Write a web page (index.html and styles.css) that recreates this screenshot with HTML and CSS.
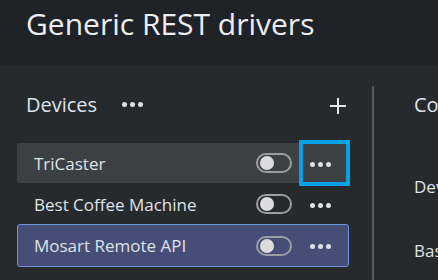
FILE: index.html
```html
<!DOCTYPE html>
<html lang="en">
<head>
  <meta charset="UTF-8">
  <title>Generic REST drivers</title>
  <link rel="stylesheet" href="styles.css">
</head>
<body>

<div class="page-header">
  <h1>Generic REST drivers</h1>
</div>

<div class="page-body">
  <div class="devices-panel">
    <div class="panel-head">
      <span class="panel-title">Devices</span>
      <span class="dots"><i></i><i></i><i></i></span>
      <span class="add-btn">
        <svg width="16" height="16" viewBox="0 0 16 16"><path d="M8 0v16M0 8h16" stroke="#e4e7ea" stroke-width="2"/></svg>
      </span>
    </div>

    <div class="device-list">
      <div class="device-row hover">
        <span class="device-name">TriCaster</span>
        <span class="toggle"></span>
        <span class="more focused"><span class="dots"><i></i><i></i><i></i></span></span>
      </div>
      <div class="device-row">
        <span class="device-name">Best Coffee Machine</span>
        <span class="toggle"></span>
        <span class="more"><span class="dots"><i></i><i></i><i></i></span></span>
      </div>
      <div class="device-row selected">
        <span class="device-name">Mosart Remote API</span>
        <span class="toggle"></span>
        <span class="more"><span class="dots"><i></i><i></i><i></i></span></span>
      </div>
    </div>
  </div>

  <div class="config-panel">
    <div class="config-title">Configuration</div>
    <div class="config-label first">Device name</div>
    <div class="config-label">Base URL</div>
  </div>
</div>

</body>
</html>
```

FILE: styles.css
```css
html, body {
  height: 100%;
  margin: 0;
  padding: 0;
  font-family: "Open Sans", "Noto Sans", sans-serif;
  background-color: #262a2d;
  color: #dfe3e8;
  overflow: hidden;
}

.page-header {
  height: 66px;
  background-color: #1f2227;
  padding: 0 26px;
  box-sizing: border-box;
}

.page-header h1 {
  margin: 0;
  padding-top: 4px;
  font-size: 30px;
  font-weight: 400;
  color: #eceef1;
  line-height: 40px;
  white-space: nowrap;
}

.page-body {
  display: flex;
  height: 214px;
}

.devices-panel {
  flex: none;
  width: 372px;
  padding: 0 23px 0 17px;
  box-sizing: border-box;
}

.panel-head {
  display: flex;
  align-items: center;
  height: 77px;
  padding: 0 0 0 9px;
}

.panel-title {
  font-size: 20px;
  margin-right: 25px;
}

.add-btn {
  margin-left: auto;
  margin-right: 3px;
  display: flex;
  padding-top: 2px;
}

.dots {
  display: flex;
  gap: 3px;
}

.dots i {
  width: 5px;
  height: 5px;
  border-radius: 50%;
  background-color: #dde0e4;
}

.device-list {
  display: flex;
  flex-direction: column;
  gap: 1px;
}

.device-row {
  display: flex;
  align-items: center;
  height: 40px;
  padding: 0 0 0 16px;
  border: 1px solid transparent;
  border-radius: 3px;
  box-sizing: border-box;
}

.device-row.hover {
  background-color: #3c4043;
}

.device-row.selected {
  background-color: #464d76;
  border-color: #6f93db;
  height: 43px;
  margin-top: -1px;
}

.device-name {
  font-size: 17px;
  flex: 1;
  white-space: nowrap;
}

.toggle {
  width: 36px;
  height: 20px;
  border: 2px solid #9a9da1;
  border-radius: 10px;
  box-sizing: border-box;
  display: flex;
  align-items: center;
  padding-left: 2px;
}

.toggle::before {
  content: "";
  width: 14px;
  height: 14px;
  border-radius: 50%;
  background-color: #dcdcde;
}

.more {
  flex: none;
  width: 51px;
  height: 46px;
  margin-left: 7px;
  margin-right: -2px;
  padding-left: 11px;
  padding-top: 2px;
  display: flex;
  align-items: center;
  box-sizing: border-box;
}

.more.focused {
  border: 4px solid #05a2e6;
  padding-left: 7px;
}

.config-panel {
  border-left: 2px solid #55595d;
  margin-top: 20px;
  padding-left: 40px;
  flex: 1;
}

.config-title {
  font-size: 20px;
  line-height: 28px;
  margin-top: 5px;
  white-space: nowrap;
}

.config-label {
  font-size: 17px;
  line-height: 23px;
  margin-top: 41px;
  white-space: nowrap;
}

.config-label.first {
  margin-top: 56px;
}
```
